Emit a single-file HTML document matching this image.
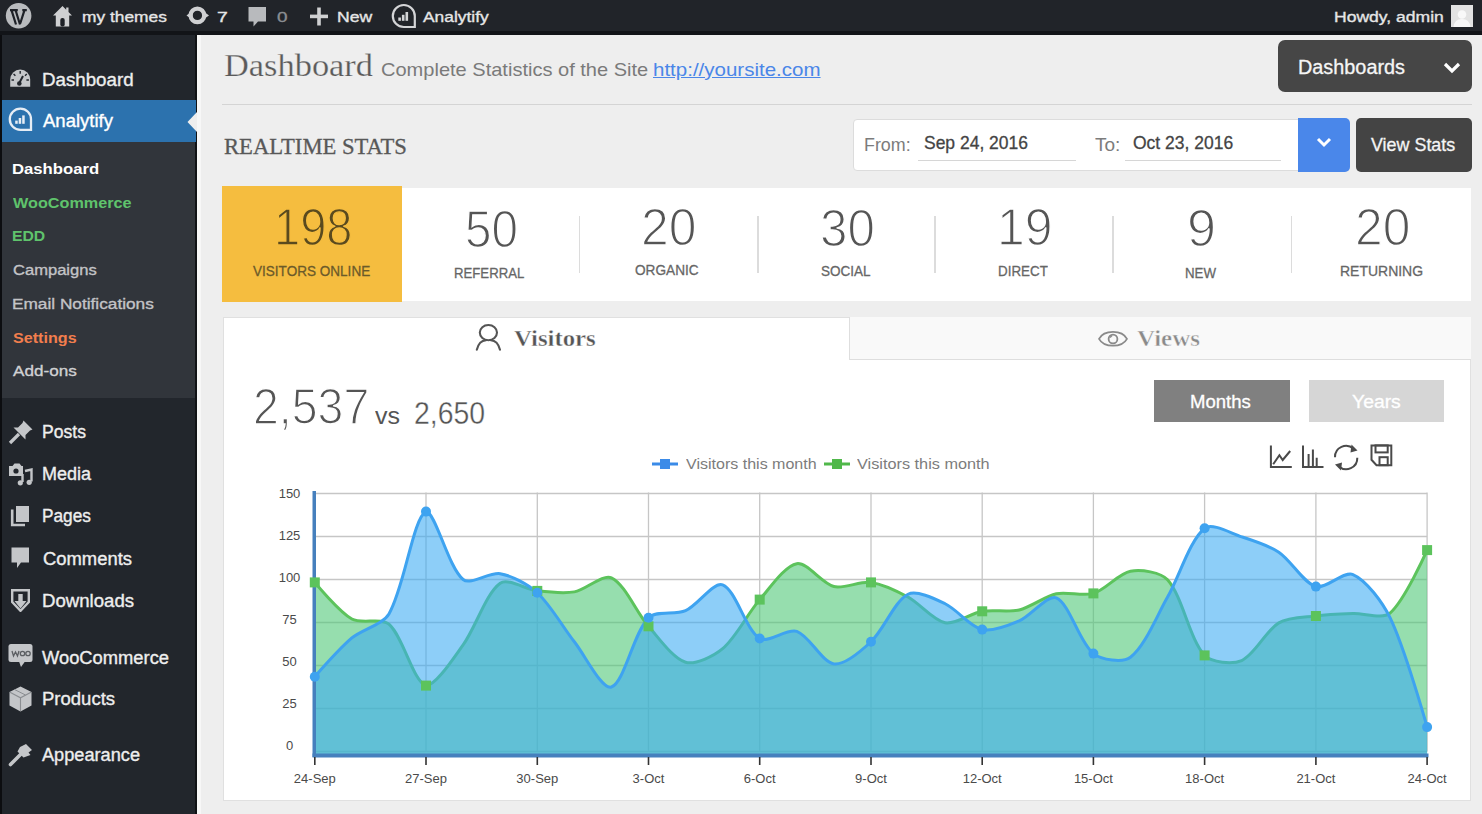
<!DOCTYPE html>
<html><head><meta charset="utf-8"><title>Analytify Dashboard</title><style>
*{margin:0;padding:0;box-sizing:border-box}
html,body{width:1482px;height:814px;overflow:hidden;background:#efefef;font-family:"Liberation Sans", sans-serif}
.abs{position:absolute}
.t{position:absolute;white-space:nowrap}
</style></head><body>
<div class="abs" style="left:0;top:0;width:1482px;height:814px;background:#eeeeee"></div>
<div class="abs" style="left:197px;top:35px;width:4px;height:779px;background:#f7f7f7"></div>
<div class="abs" style="left:0;top:0;width:1482px;height:35px;background:#212429"></div>
<div class="abs" style="left:0;top:31px;width:1482px;height:4px;background:#121418"></div>
<div class="abs" style="left:0;top:35px;width:197px;height:779px;background:#22262c"></div>
<div class="abs" style="left:0;top:35px;width:2px;height:779px;background:#0c0d10"></div>
<div class="abs" style="left:194.5px;top:35px;width:2.5px;height:779px;background:#101215"></div>
<div class="abs" style="left:2px;top:142px;width:192.5px;height:255.5px;background:#31353b"></div>
<div class="abs" style="left:2px;top:100px;width:194px;height:42px;background:#2c72ae"></div>
<svg class="abs" style="left:186px;top:110px" width="12" height="24"><polygon points="1.5,12 11,2 11,22" fill="#eeeeee"/></svg>
<div class="abs" style="left:222px;top:104px;width:1250px;height:1.3px;background:#d4d4d4"></div>
<div class="abs" style="left:1278px;top:40px;width:194px;height:51.5px;background:#464646;border-radius:7px"></div>
<svg class="abs" style="left:1440px;top:58px" width="24" height="20"><polyline points="5,6 12,13 19,6" fill="none" stroke="#fff" stroke-width="3.2"/></svg>
<div class="abs" style="left:853px;top:119px;width:450px;height:52px;background:#fff;border:1.5px solid #dcdcdc;border-radius:4px"></div>
<div class="abs" style="left:918px;top:160.3px;width:158px;height:1.1px;background:#d6d6d6"></div>
<div class="abs" style="left:1124.5px;top:160.3px;width:156.5px;height:1.1px;background:#d6d6d6"></div>
<div class="abs" style="left:1298px;top:118px;width:51.5px;height:53.5px;background:#4a87ea;border-radius:0 5px 5px 0"></div>
<svg class="abs" style="left:1312px;top:133px" width="24" height="20"><polyline points="6,6 12,12 18,6" fill="none" stroke="#fff" stroke-width="3"/></svg>
<div class="abs" style="left:1356px;top:118px;width:116px;height:53.5px;background:#444444;border-radius:5px"></div>
<div class="abs" style="left:222px;top:187.5px;width:1249px;height:113px;background:#ffffff"></div>
<div class="abs" style="left:222px;top:186px;width:179.5px;height:116px;background:#f5bd3f"></div>
<div class="abs" style="left:578.6px;top:216px;width:1.5px;height:57px;background:#dcdcdc"></div>
<div class="abs" style="left:757.2px;top:216px;width:1.5px;height:57px;background:#dcdcdc"></div>
<div class="abs" style="left:934.0px;top:216px;width:1.5px;height:57px;background:#dcdcdc"></div>
<div class="abs" style="left:1112.2px;top:216px;width:1.5px;height:57px;background:#dcdcdc"></div>
<div class="abs" style="left:1290.8px;top:216px;width:1.5px;height:57px;background:#dcdcdc"></div>
<div class="abs" style="left:222.5px;top:316.5px;width:1248.5px;height:484.5px;background:#fff;border:1.5px solid #e0e0e0"></div>
<div class="abs" style="left:848.5px;top:317px;width:622.5px;height:42.5px;background:#f9f9f9;border-left:1.5px solid #dedede;border-bottom:1.5px solid #dedede"></div>
<div class="abs" style="left:1154.3px;top:380.4px;width:135.7px;height:41.6px;background:#808080"></div>
<div class="abs" style="left:1308.5px;top:380.4px;width:135px;height:41.6px;background:#d6d6d6"></div>
<svg class="abs" style="left:0;top:0" width="1482" height="814">
<line x1="314.8" x2="1427.1" y1="751.5" y2="751.5" stroke="#c6c6c6" stroke-width="1.3"/>
<line x1="314.8" x2="1427.1" y1="708.5" y2="708.5" stroke="#c6c6c6" stroke-width="1.3"/>
<line x1="314.8" x2="1427.1" y1="665.5" y2="665.5" stroke="#c6c6c6" stroke-width="1.3"/>
<line x1="314.8" x2="1427.1" y1="622.5" y2="622.5" stroke="#c6c6c6" stroke-width="1.3"/>
<line x1="314.8" x2="1427.1" y1="579.5" y2="579.5" stroke="#c6c6c6" stroke-width="1.3"/>
<line x1="314.8" x2="1427.1" y1="536.5" y2="536.5" stroke="#c6c6c6" stroke-width="1.3"/>
<line x1="314.8" x2="1427.1" y1="493.5" y2="493.5" stroke="#c6c6c6" stroke-width="1.3"/>
<line x1="314.8" x2="314.8" y1="492.5" y2="751.5" stroke="#c6c6c6" stroke-width="1.3"/>
<line x1="426.0" x2="426.0" y1="492.5" y2="751.5" stroke="#c6c6c6" stroke-width="1.3"/>
<line x1="537.3" x2="537.3" y1="492.5" y2="751.5" stroke="#c6c6c6" stroke-width="1.3"/>
<line x1="648.5" x2="648.5" y1="492.5" y2="751.5" stroke="#c6c6c6" stroke-width="1.3"/>
<line x1="759.7" x2="759.7" y1="492.5" y2="751.5" stroke="#c6c6c6" stroke-width="1.3"/>
<line x1="871.0" x2="871.0" y1="492.5" y2="751.5" stroke="#c6c6c6" stroke-width="1.3"/>
<line x1="982.2" x2="982.2" y1="492.5" y2="751.5" stroke="#c6c6c6" stroke-width="1.3"/>
<line x1="1093.4" x2="1093.4" y1="492.5" y2="751.5" stroke="#c6c6c6" stroke-width="1.3"/>
<line x1="1204.6" x2="1204.6" y1="492.5" y2="751.5" stroke="#c6c6c6" stroke-width="1.3"/>
<line x1="1315.9" x2="1315.9" y1="492.5" y2="751.5" stroke="#c6c6c6" stroke-width="1.3"/>
<line x1="1427.1" x2="1427.1" y1="492.5" y2="751.5" stroke="#c6c6c6" stroke-width="1.3"/>
<path d="M314.80 582.42 C314.80 582.42 338.93 611.76 351.88 619.06 C361.18 624.30 381.33 617.37 388.95 624.22 C403.57 637.34 413.45 682.12 426.03 685.62 C435.70 685.62 453.45 658.18 463.11 644.86 C475.70 627.48 485.61 593.90 500.19 583.28 C507.86 577.70 526.03 589.55 537.26 590.85 C548.27 592.13 563.59 593.78 574.34 591.88 C585.84 589.86 602.65 573.72 611.42 577.78 C624.90 584.04 636.44 612.56 648.49 626.28 C658.69 637.89 672.96 658.43 685.57 662.23 C695.21 665.14 713.95 655.99 722.65 648.64 C736.19 637.21 747.64 613.48 759.72 599.62 C769.88 587.99 784.73 565.80 796.80 563.68 C806.98 561.88 821.89 583.52 833.88 586.55 C844.14 589.15 860.20 580.90 870.95 582.42 C882.45 584.05 897.60 591.36 908.03 597.04 C919.85 603.49 933.15 620.54 945.11 622.84 C955.39 624.82 970.81 613.30 982.19 611.32 C993.06 609.43 1008.62 612.46 1019.26 609.94 C1030.87 607.20 1044.73 596.36 1056.34 593.78 C1066.98 591.41 1083.14 596.55 1093.42 593.43 C1105.39 589.79 1118.67 573.41 1130.49 571.24 C1140.91 569.33 1160.64 571.98 1167.57 579.84 C1182.89 597.22 1189.25 638.60 1204.65 655.35 C1211.50 662.80 1232.50 664.56 1241.72 660.51 C1254.75 654.80 1265.82 630.64 1278.80 622.84 C1288.07 617.28 1304.67 617.37 1315.88 615.96 C1326.92 614.58 1341.82 614.00 1352.96 613.56 C1364.07 613.12 1382.54 619.45 1390.03 613.04 C1404.79 600.41 1427.11 550.09 1427.11 550.09 L1427.11 754.50 L314.80 754.50 Z" fill="#50c878" fill-opacity="0.6"/>
<path d="M314.80 582.42 C314.80 582.42 338.93 611.76 351.88 619.06 C361.18 624.30 381.33 617.37 388.95 624.22 C403.57 637.34 413.45 682.12 426.03 685.62 C435.70 685.62 453.45 658.18 463.11 644.86 C475.70 627.48 485.61 593.90 500.19 583.28 C507.86 577.70 526.03 589.55 537.26 590.85 C548.27 592.13 563.59 593.78 574.34 591.88 C585.84 589.86 602.65 573.72 611.42 577.78 C624.90 584.04 636.44 612.56 648.49 626.28 C658.69 637.89 672.96 658.43 685.57 662.23 C695.21 665.14 713.95 655.99 722.65 648.64 C736.19 637.21 747.64 613.48 759.72 599.62 C769.88 587.99 784.73 565.80 796.80 563.68 C806.98 561.88 821.89 583.52 833.88 586.55 C844.14 589.15 860.20 580.90 870.95 582.42 C882.45 584.05 897.60 591.36 908.03 597.04 C919.85 603.49 933.15 620.54 945.11 622.84 C955.39 624.82 970.81 613.30 982.19 611.32 C993.06 609.43 1008.62 612.46 1019.26 609.94 C1030.87 607.20 1044.73 596.36 1056.34 593.78 C1066.98 591.41 1083.14 596.55 1093.42 593.43 C1105.39 589.79 1118.67 573.41 1130.49 571.24 C1140.91 569.33 1160.64 571.98 1167.57 579.84 C1182.89 597.22 1189.25 638.60 1204.65 655.35 C1211.50 662.80 1232.50 664.56 1241.72 660.51 C1254.75 654.80 1265.82 630.64 1278.80 622.84 C1288.07 617.28 1304.67 617.37 1315.88 615.96 C1326.92 614.58 1341.82 614.00 1352.96 613.56 C1364.07 613.12 1382.54 619.45 1390.03 613.04 C1404.79 600.41 1427.11 550.09 1427.11 550.09" fill="none" stroke="#5cc35c" stroke-width="3"/>
<path d="M314.80 676.68 C314.80 676.68 339.69 648.30 351.88 637.98 C361.93 629.47 382.53 624.85 388.95 613.90 C404.77 586.93 413.03 517.59 426.03 511.56 C435.28 511.56 448.13 566.96 463.11 579.50 C470.37 585.58 489.65 571.77 500.19 573.65 C511.89 575.74 528.27 584.48 537.26 592.74 C550.52 604.92 562.94 627.28 574.34 641.76 C585.19 655.55 601.93 690.08 611.42 687.00 C624.17 682.86 633.46 633.16 648.49 617.68 C655.71 610.25 675.44 615.12 685.57 610.63 C697.69 605.26 713.54 581.41 722.65 584.83 C735.79 589.77 745.63 629.64 759.72 638.50 C767.88 643.62 787.16 628.13 796.80 631.44 C809.40 635.77 822.02 662.30 833.88 663.95 C844.27 665.40 861.66 650.49 870.95 641.76 C883.91 629.60 894.43 601.27 908.03 594.29 C916.67 589.86 934.91 598.90 945.11 603.75 C957.15 609.48 970.11 626.75 982.19 629.55 C992.36 631.91 1008.90 625.37 1019.26 620.95 C1031.15 615.88 1047.56 594.03 1056.34 597.90 C1069.80 603.84 1079.12 642.20 1093.42 653.63 C1101.37 660.00 1122.82 663.10 1130.49 657.24 C1145.06 646.13 1157.00 615.43 1167.57 597.04 C1179.25 576.73 1189.69 540.39 1204.65 528.24 C1211.93 522.33 1230.89 533.35 1241.72 536.84 C1253.14 540.52 1268.96 545.56 1278.80 552.15 C1291.21 560.47 1303.32 582.76 1315.88 586.55 C1325.56 589.47 1343.91 570.72 1352.96 574.51 C1366.16 580.05 1382.69 602.58 1390.03 617.68 C1404.94 648.35 1427.11 727.08 1427.11 727.08 L1427.11 754.50 L314.80 754.50 Z" fill="#3aaaf3" fill-opacity="0.58"/>
<path d="M314.80 676.68 C314.80 676.68 339.69 648.30 351.88 637.98 C361.93 629.47 382.53 624.85 388.95 613.90 C404.77 586.93 413.03 517.59 426.03 511.56 C435.28 511.56 448.13 566.96 463.11 579.50 C470.37 585.58 489.65 571.77 500.19 573.65 C511.89 575.74 528.27 584.48 537.26 592.74 C550.52 604.92 562.94 627.28 574.34 641.76 C585.19 655.55 601.93 690.08 611.42 687.00 C624.17 682.86 633.46 633.16 648.49 617.68 C655.71 610.25 675.44 615.12 685.57 610.63 C697.69 605.26 713.54 581.41 722.65 584.83 C735.79 589.77 745.63 629.64 759.72 638.50 C767.88 643.62 787.16 628.13 796.80 631.44 C809.40 635.77 822.02 662.30 833.88 663.95 C844.27 665.40 861.66 650.49 870.95 641.76 C883.91 629.60 894.43 601.27 908.03 594.29 C916.67 589.86 934.91 598.90 945.11 603.75 C957.15 609.48 970.11 626.75 982.19 629.55 C992.36 631.91 1008.90 625.37 1019.26 620.95 C1031.15 615.88 1047.56 594.03 1056.34 597.90 C1069.80 603.84 1079.12 642.20 1093.42 653.63 C1101.37 660.00 1122.82 663.10 1130.49 657.24 C1145.06 646.13 1157.00 615.43 1167.57 597.04 C1179.25 576.73 1189.69 540.39 1204.65 528.24 C1211.93 522.33 1230.89 533.35 1241.72 536.84 C1253.14 540.52 1268.96 545.56 1278.80 552.15 C1291.21 560.47 1303.32 582.76 1315.88 586.55 C1325.56 589.47 1343.91 570.72 1352.96 574.51 C1366.16 580.05 1382.69 602.58 1390.03 617.68 C1404.94 648.35 1427.11 727.08 1427.11 727.08" fill="none" stroke="#3ea3f0" stroke-width="3"/>
<rect x="312.5" y="491" width="3.5" height="266" fill="#4680bd"/>
<rect x="312.5" y="753.5" width="1116" height="4" fill="#4680bd"/>
<rect x="314.0" y="757" width="1.6" height="8" fill="#333"/>
<rect x="425.2" y="757" width="1.6" height="8" fill="#333"/>
<rect x="536.5" y="757" width="1.6" height="8" fill="#333"/>
<rect x="647.7" y="757" width="1.6" height="8" fill="#333"/>
<rect x="758.9" y="757" width="1.6" height="8" fill="#333"/>
<rect x="870.2" y="757" width="1.6" height="8" fill="#333"/>
<rect x="981.4" y="757" width="1.6" height="8" fill="#333"/>
<rect x="1092.6" y="757" width="1.6" height="8" fill="#333"/>
<rect x="1203.8" y="757" width="1.6" height="8" fill="#333"/>
<rect x="1315.1" y="757" width="1.6" height="8" fill="#333"/>
<rect x="1426.3" y="757" width="1.6" height="8" fill="#333"/>
<rect x="309.8" y="577.4" width="10" height="10" fill="#5cc35c"/>
<rect x="421.0" y="680.6" width="10" height="10" fill="#5cc35c"/>
<rect x="532.3" y="585.9" width="10" height="10" fill="#5cc35c"/>
<rect x="643.5" y="621.3" width="10" height="10" fill="#5cc35c"/>
<rect x="754.7" y="594.6" width="10" height="10" fill="#5cc35c"/>
<rect x="866.0" y="577.4" width="10" height="10" fill="#5cc35c"/>
<rect x="977.2" y="606.3" width="10" height="10" fill="#5cc35c"/>
<rect x="1088.4" y="588.4" width="10" height="10" fill="#5cc35c"/>
<rect x="1199.6" y="650.4" width="10" height="10" fill="#5cc35c"/>
<rect x="1310.9" y="611.0" width="10" height="10" fill="#5cc35c"/>
<rect x="1422.1" y="545.1" width="10" height="10" fill="#5cc35c"/>
<circle cx="314.8" cy="676.7" r="5" fill="#3ea3f0"/>
<circle cx="426.0" cy="511.6" r="5" fill="#3ea3f0"/>
<circle cx="537.3" cy="592.7" r="5" fill="#3ea3f0"/>
<circle cx="648.5" cy="617.7" r="5" fill="#3ea3f0"/>
<circle cx="759.7" cy="638.5" r="5" fill="#3ea3f0"/>
<circle cx="871.0" cy="641.8" r="5" fill="#3ea3f0"/>
<circle cx="982.2" cy="629.6" r="5" fill="#3ea3f0"/>
<circle cx="1093.4" cy="653.6" r="5" fill="#3ea3f0"/>
<circle cx="1204.6" cy="528.2" r="5" fill="#3ea3f0"/>
<circle cx="1315.9" cy="586.6" r="5" fill="#3ea3f0"/>
<circle cx="1427.1" cy="727.1" r="5" fill="#3ea3f0"/>
<rect x="652" y="462.5" width="26" height="3" fill="#3b8be8"/><rect x="660" y="459" width="10" height="10" fill="#3b8be8"/>
<rect x="824" y="462.5" width="26" height="3" fill="#50b84a"/><rect x="832" y="459" width="10" height="10" fill="#50b84a"/>
</svg>
<svg class="abs" style="left:5px;top:2px" width="28" height="28" viewBox="0 0 28 28"><circle cx="13.6" cy="13.7" r="12.8" fill="#b9bbbe"/><path d="M6.5 8.2 L11 22.5 M10.6 8.2 L15 22.5 M19.5 8.2 L15.2 21.5 M17.3 8.2 L21.8 8.2 M5 8.2 L9 8.2 M8.8 8.2 L12.8 8.2" stroke="#1e2127" stroke-width="2.2" fill="none"/><path d="M4.5 11 A10 10 0 0 0 9 21.5" stroke="#b9bbbe" stroke-width="1" fill="none"/></svg>
<svg class="abs" style="left:52px;top:5px" width="21" height="22" viewBox="0 0 21 22"><path d="M10.5 1 L1 10.5 L3.8 10.5 L3.8 21.5 L17.2 21.5 L17.2 10.5 L20 10.5 L16.5 7 L16.5 2.5 L14.2 2.5 L14.2 4.7 Z" fill="#cfd0d2"/><rect x="8.3" y="13" width="4.4" height="8.5" rx="2" fill="#1e2127"/></svg>
<svg class="abs" style="left:185px;top:4px" width="26" height="24" viewBox="0 0 26 24"><circle cx="12.4" cy="11.4" r="6.8" fill="none" stroke="#cfd0d2" stroke-width="4.2"/><polygon points="1.5,11.4 7.5,6.5 7.5,16" fill="#cfd0d2"/><polygon points="24,11.4 17.5,6.5 17.5,16" fill="#cfd0d2"/></svg>
<svg class="abs" style="left:248px;top:6px" width="19" height="21" viewBox="0 0 19 21"><path d="M0.5 1 H18 V15.5 H10 L5.5 20.5 L5.5 15.5 H0.5 Z" fill="#b8babd"/></svg>
<svg class="abs" style="left:309px;top:7px" width="20" height="20" viewBox="0 0 20 20"><rect x="8.2" y="0.5" width="3.6" height="18" fill="#cfd0d2"/><rect x="1" y="7.6" width="18" height="3.6" fill="#cfd0d2"/></svg>
<svg class="abs" style="left:391px;top:3px" width="26" height="26" viewBox="0 0 26 26"><path d="M23.8 13 A11 11 0 1 0 12.8 24 L23.8 24 Z" fill="none" stroke="#d4d5d7" stroke-width="2.2"/><rect x="7.3" y="14.5" width="2.6" height="3.3" fill="#d4d5d7"/><rect x="10.9" y="11.8" width="2.6" height="6" fill="#d4d5d7"/><rect x="14.5" y="9" width="2.6" height="8.8" fill="#d4d5d7"/></svg>
<div class="abs" style="left:1451px;top:5px;width:22px;height:22px;background:#e2e2e2"></div>
<svg class="abs" style="left:1451px;top:7px" width="22" height="20" viewBox="0 0 22 20"><circle cx="11" cy="7.5" r="4.3" fill="#f8f8f8"/><path d="M2.5 20 Q3.5 12 11 12 Q18.5 12 19.5 20 Z" fill="#f8f8f8"/></svg>
<svg class="abs" style="left:9px;top:68px" width="23" height="21" viewBox="0 0 23 21"><path d="M1.2 18.8 V11.5 A10 10 0 0 1 21.2 11.5 V18.8 Z" fill="#c4c6c9"/><path d="M11.2 3 V5.8 M4.6 6 L6.4 7.8 M17.8 6 L16 7.8 M2.5 12 H5 M19.9 12 H17.4" stroke="#22262c" stroke-width="1.4"/><path d="M10 15.5 L14 8" stroke="#22262c" stroke-width="2"/><circle cx="10.3" cy="15.5" r="2.3" fill="#22262c"/></svg>
<svg class="abs" style="left:8px;top:107px" width="26" height="26" viewBox="0 0 26 26"><path d="M23 12.3 A10.6 10.6 0 1 0 12.4 22.9 L23 22.9 Z" fill="none" stroke="#e6edf5" stroke-width="2.3"/><rect x="7.2" y="13.6" width="2.5" height="3.2" fill="#e6edf5"/><rect x="10.7" y="11" width="2.5" height="5.8" fill="#e6edf5"/><rect x="14.2" y="8.4" width="2.5" height="8.4" fill="#e6edf5"/></svg>
<svg class="abs" style="left:8px;top:419px" width="26" height="26" viewBox="0 0 26 26"><path d="M15.5 1.5 L24.5 10.5 L22 11.5 L17.5 16 L17.5 20.5 L5.5 8.5 L10 8.5 L14.5 4 Z" fill="#c4c6c9"/><path d="M11 15 L2 24" stroke="#c4c6c9" stroke-width="3.2"/></svg>
<svg class="abs" style="left:8px;top:462px" width="26" height="25" viewBox="0 0 26 25"><path d="M1 4 H4.5 L6.5 1.5 H11.5 L13.5 4 H15 V14 H1 Z" fill="#c4c6c9"/><circle cx="8" cy="9" r="2.6" fill="#22262c"/><path d="M17 9 L23.5 7.5 L23.5 19.5" stroke="#c4c6c9" stroke-width="2.4" fill="none"/><circle cx="21.2" cy="20.3" r="2.6" fill="#c4c6c9"/><path d="M14.5 12 V20" stroke="#c4c6c9" stroke-width="2.4"/><circle cx="12.3" cy="20.8" r="2.6" fill="#c4c6c9"/></svg>
<svg class="abs" style="left:10px;top:505px" width="21" height="22" viewBox="0 0 21 22"><rect x="6" y="1" width="13" height="16" fill="#c4c6c9"/><path d="M2.2 4.5 V20 H15" stroke="#c4c6c9" stroke-width="2.6" fill="none"/></svg>
<svg class="abs" style="left:11px;top:547px" width="19" height="22" viewBox="0 0 19 22"><path d="M0.5 0.5 H18 V15.5 H10 L6 21 V15.5 H0.5 Z" fill="#c4c6c9"/></svg>
<svg class="abs" style="left:11px;top:589px" width="19" height="23" viewBox="0 0 19 23"><path d="M1.2 1.2 H17.8 V13 L9.5 21.8 L1.2 13 Z" fill="none" stroke="#c4c6c9" stroke-width="2.4"/><rect x="7.3" y="5" width="4.4" height="8" fill="#c4c6c9"/><polygon points="3.5,12 15.5,12 9.5,19.5" fill="#c4c6c9"/></svg>
<svg class="abs" style="left:8px;top:643px" width="25" height="25" viewBox="0 0 25 25"><rect x="0.5" y="1" width="24" height="18" rx="2.5" fill="#c4c6c9"/><polygon points="11,18.5 17,18.5 13,24" fill="#c4c6c9"/><path d="M4 8 L5.5 13 L7.5 9 L9.5 13 L11 8" stroke="#5b5e62" stroke-width="1.3" fill="none"/><circle cx="14.5" cy="10.5" r="2.2" fill="none" stroke="#5b5e62" stroke-width="1.3"/><circle cx="20" cy="10.5" r="2.2" fill="none" stroke="#5b5e62" stroke-width="1.3"/></svg>
<svg class="abs" style="left:9px;top:686px" width="23" height="26" viewBox="0 0 23 26"><polygon points="11.5,0.5 22.5,6 22.5,19.5 11.5,25.5 0.5,19.5 0.5,6" fill="#c4c6c9"/><path d="M1 6.3 L11.5 11.8 L22 6.3 M11.5 11.8 V25" stroke="#8b8e92" stroke-width="1.1" fill="none"/><path d="M5.5 3.5 L16.5 9" stroke="#8b8e92" stroke-width="1" fill="none"/></svg>
<svg class="abs" style="left:8px;top:743px" width="25" height="24" viewBox="0 0 25 24"><path d="M12 4 L18 1 L24 7 L20.5 9.5 L22.5 12 L15.5 14.5 L9.5 8.5 Z" fill="#c4c6c9"/><path d="M12.5 11.5 L2.5 21.5" stroke="#c4c6c9" stroke-width="3.6" stroke-linecap="round"/></svg>
<svg class="abs" style="left:474px;top:322px" width="30" height="30" viewBox="0 0 30 30"><ellipse cx="14.4" cy="10.6" rx="8.6" ry="7.6" fill="none" stroke="#555" stroke-width="2.1"/><path d="M2.8 27.8 Q5 18.5 12 18.2 M16.8 18.2 Q23.8 18.5 26 27.8" fill="none" stroke="#555" stroke-width="2.1" stroke-linecap="round"/></svg>
<svg class="abs" style="left:1096px;top:328px" width="34" height="22" viewBox="0 0 34 22"><path d="M3 10.8 C8 1.5, 26 1.5, 31 10.8 C26 20, 8 20, 3 10.8 Z" fill="none" stroke="#8a8a8a" stroke-width="1.7"/><circle cx="17" cy="11" r="4.4" fill="none" stroke="#8a8a8a" stroke-width="1.8"/><path d="M14 9.5 L16 7.5" stroke="#8a8a8a" stroke-width="1.6"/></svg>
<svg class="abs" style="left:1260px;top:435px" width="140" height="40" viewBox="0 0 140 40"><path d="M10.9 10.5 V32.1 H31.8" fill="none" stroke="#4a4a4a" stroke-width="2"/><path d="M13.2 29.3 L19.4 20.3 L22.7 25 L30.2 16" fill="none" stroke="#4a4a4a" stroke-width="2"/><path d="M43 10.5 V32.1 H63.5" fill="none" stroke="#4a4a4a" stroke-width="2"/><path d="M48.6 32 V18.9 M52.9 32 V14.6 M56.7 32 V22.7" fill="none" stroke="#4a4a4a" stroke-width="2"/><path d="M75 22.2 A11 11 0 0 1 93.5 13.8" fill="none" stroke="#4a4a4a" stroke-width="2"/><path d="M97.3 22.8 A11 11 0 0 1 78.8 31.2" fill="none" stroke="#4a4a4a" stroke-width="2"/><polygon points="91.5,9.5 97.5,15.5 90.5,17.5" fill="#4a4a4a"/><polygon points="81,35.5 75,29.5 82,27.5" fill="#4a4a4a"/><path d="M111.5 10.4 H131.3 V30.2 H116.5 L111.5 24.8 Z" fill="none" stroke="#4a4a4a" stroke-width="2"/><rect x="115.5" y="10.4" width="12.2" height="7" fill="none" stroke="#4a4a4a" stroke-width="2"/><rect x="119.5" y="22.2" width="8.2" height="8" fill="none" stroke="#4a4a4a" stroke-width="2"/></svg>
<div id="tb_mythemes" class="t" style="left:81.88px;top:9.18px;font-size:15.5px;line-height:15.5px;color:#e6e6e6;font-family:'Liberation Sans', sans-serif;font-weight:400;transform:scaleX(1.1193);transform-origin:0 0;-webkit-text-stroke:0.35px #e6e6e6;">my themes</div>
<div id="tb_7" class="t" style="left:217.00px;top:9.18px;font-size:15.5px;line-height:15.5px;color:#e6e6e6;font-family:'Liberation Sans', sans-serif;font-weight:400;transform:scaleX(1.2500);transform-origin:0 0;-webkit-text-stroke:0.35px #e6e6e6;">7</div>
<div id="tb_0" class="t" style="left:277.00px;top:9.18px;font-size:15.5px;line-height:15.5px;color:#8a8d91;font-family:'Liberation Sans', sans-serif;font-weight:400;transform:scaleX(1.2222);transform-origin:0 0;-webkit-text-stroke:0.35px #8a8d91;">0</div>
<div id="tb_new" class="t" style="left:336.86px;top:9.18px;font-size:15.5px;line-height:15.5px;color:#e6e6e6;font-family:'Liberation Sans', sans-serif;font-weight:400;transform:scaleX(1.1358);transform-origin:0 0;-webkit-text-stroke:0.35px #e6e6e6;">New</div>
<div id="tb_analytify" class="t" style="left:423.00px;top:9.18px;font-size:15.5px;line-height:15.5px;color:#e6e6e6;font-family:'Liberation Sans', sans-serif;font-weight:400;transform:scaleX(1.1219);transform-origin:0 0;-webkit-text-stroke:0.35px #e6e6e6;">Analytify</div>
<div id="tb_howdy" class="t" style="left:1333.87px;top:9.38px;font-size:15.5px;line-height:15.5px;color:#e6e6e6;font-family:'Liberation Sans', sans-serif;font-weight:400;transform:scaleX(1.1316);transform-origin:0 0;-webkit-text-stroke:0.35px #e6e6e6;">Howdy, admin</div>
<div id="sb_dash" class="t" style="left:42.46px;top:71.16px;font-size:18px;line-height:18px;color:#eeeeee;font-family:'Liberation Sans', sans-serif;font-weight:400;transform:scaleX(1.0401);transform-origin:0 0;-webkit-text-stroke:0.35px #eeeeee;">Dashboard</div>
<div id="sb_analytify" class="t" style="left:42.70px;top:112.46px;font-size:18px;line-height:18px;color:#ffffff;font-family:'Liberation Sans', sans-serif;font-weight:400;transform:scaleX(1.0290);transform-origin:0 0;-webkit-text-stroke:0.35px #ffffff;">Analytify</div>
<div id="sub0" class="t" style="left:12.32px;top:161.28px;font-size:15.5px;line-height:15.5px;color:#ffffff;font-family:'Liberation Sans', sans-serif;font-weight:700;transform:scaleX(1.0769);transform-origin:0 0;">Dashboard</div>
<div id="sub1" class="t" style="left:13.00px;top:194.88px;font-size:15.5px;line-height:15.5px;color:#5fc36c;font-family:'Liberation Sans', sans-serif;font-weight:700;transform:scaleX(1.0458);transform-origin:0 0;">WooCommerce</div>
<div id="sub2" class="t" style="left:11.99px;top:228.38px;font-size:15.5px;line-height:15.5px;color:#5fc36c;font-family:'Liberation Sans', sans-serif;font-weight:700;transform:scaleX(1.0148);transform-origin:0 0;">EDD</div>
<div id="sub3" class="t" style="left:13.00px;top:261.88px;font-size:15.5px;line-height:15.5px;color:#c3c4c7;font-family:'Liberation Sans', sans-serif;font-weight:400;transform:scaleX(1.0680);transform-origin:0 0;-webkit-text-stroke:0.35px #c3c4c7;">Campaigns</div>
<div id="sub4" class="t" style="left:11.89px;top:295.68px;font-size:15.5px;line-height:15.5px;color:#c3c4c7;font-family:'Liberation Sans', sans-serif;font-weight:400;transform:scaleX(1.1125);transform-origin:0 0;-webkit-text-stroke:0.35px #c3c4c7;">Email Notifications</div>
<div id="sub5" class="t" style="left:13.00px;top:329.88px;font-size:15.5px;line-height:15.5px;color:#f27e4d;font-family:'Liberation Sans', sans-serif;font-weight:700;transform:scaleX(1.0409);transform-origin:0 0;">Settings</div>
<div id="sub6" class="t" style="left:13.00px;top:362.88px;font-size:15.5px;line-height:15.5px;color:#d0d1d3;font-family:'Liberation Sans', sans-serif;font-weight:400;transform:scaleX(1.1038);transform-origin:0 0;-webkit-text-stroke:0.35px #d0d1d3;">Add-ons</div>
<div id="main0" class="t" style="left:42.02px;top:422.76px;font-size:18px;line-height:18px;color:#eeeeee;font-family:'Liberation Sans', sans-serif;font-weight:400;transform:scaleX(0.9769);transform-origin:0 0;-webkit-text-stroke:0.35px #eeeeee;">Posts</div>
<div id="main1" class="t" style="left:42.00px;top:464.76px;font-size:18px;line-height:18px;color:#eeeeee;font-family:'Liberation Sans', sans-serif;font-weight:400;-webkit-text-stroke:0.35px #eeeeee;">Media</div>
<div id="main2" class="t" style="left:42.04px;top:506.76px;font-size:18px;line-height:18px;color:#eeeeee;font-family:'Liberation Sans', sans-serif;font-weight:400;transform:scaleX(0.9593);transform-origin:0 0;-webkit-text-stroke:0.35px #eeeeee;">Pages</div>
<div id="main3" class="t" style="left:43.00px;top:549.76px;font-size:18px;line-height:18px;color:#eeeeee;font-family:'Liberation Sans', sans-serif;font-weight:400;transform:scaleX(1.0227);transform-origin:0 0;-webkit-text-stroke:0.35px #eeeeee;">Comments</div>
<div id="main4" class="t" style="left:41.97px;top:591.76px;font-size:18px;line-height:18px;color:#eeeeee;font-family:'Liberation Sans', sans-serif;font-weight:400;transform:scaleX(1.0335);transform-origin:0 0;-webkit-text-stroke:0.35px #eeeeee;">Downloads</div>
<div id="main5" class="t" style="left:42.00px;top:648.76px;font-size:18px;line-height:18px;color:#eeeeee;font-family:'Liberation Sans', sans-serif;font-weight:400;transform:scaleX(1.0185);transform-origin:0 0;-webkit-text-stroke:0.35px #eeeeee;">WooCommerce</div>
<div id="main6" class="t" style="left:41.97px;top:690.46px;font-size:18px;line-height:18px;color:#eeeeee;font-family:'Liberation Sans', sans-serif;font-weight:400;transform:scaleX(1.0281);transform-origin:0 0;-webkit-text-stroke:0.35px #eeeeee;">Products</div>
<div id="main7" class="t" style="left:42.00px;top:745.76px;font-size:18px;line-height:18px;color:#eeeeee;font-family:'Liberation Sans', sans-serif;font-weight:400;transform:scaleX(1.0096);transform-origin:0 0;-webkit-text-stroke:0.35px #eeeeee;">Appearance</div>
<div id="h_dash" class="t" style="left:224.00px;top:49.00px;font-size:32px;line-height:32px;color:#5a5a5a;font-family:'Liberation Serif', serif;font-weight:400;transform:scaleX(1.0748);transform-origin:0 0;-webkit-text-stroke:0.25px #eeeeee;">Dashboard</div>
<div id="h_complete" class="t" style="left:380.90px;top:60.74px;font-size:18.5px;line-height:18.5px;color:#7a7a7a;font-family:'Liberation Sans', sans-serif;font-weight:400;transform:scaleX(1.0828);transform-origin:0 0;">Complete Statistics of the Site</div>
<div id="h_link" class="t" style="left:652.89px;top:60.74px;font-size:18.5px;line-height:18.5px;color:#4a86e8;font-family:'Liberation Sans', sans-serif;font-weight:400;transform:scaleX(1.1086);transform-origin:0 0;text-decoration:underline;">http://yoursite.com</div>
<div id="h_dashboards" class="t" style="left:1298.01px;top:57.27px;font-size:20px;line-height:20px;color:#f5f5f5;font-family:'Liberation Sans', sans-serif;font-weight:400;transform:scaleX(0.9921);transform-origin:0 0;-webkit-text-stroke:0.30px #f5f5f5;">Dashboards</div>
<div id="rt_title" class="t" style="left:224.40px;top:135.24px;font-size:23px;line-height:23px;color:#585858;font-family:'Liberation Serif', serif;font-weight:400;transform:scaleX(0.9843);transform-origin:0 0;-webkit-text-stroke:0.30px #585858;">REALTIME STATS</div>
<div id="d_from" class="t" style="left:864.43px;top:136.14px;font-size:18.5px;line-height:18.5px;color:#7c7c7c;font-family:'Liberation Sans', sans-serif;font-weight:400;transform:scaleX(0.9662);transform-origin:0 0;">From:</div>
<div id="d_fromv" class="t" style="left:924.00px;top:133.84px;font-size:18.5px;line-height:18.5px;color:#444444;font-family:'Liberation Sans', sans-serif;font-weight:400;transform:scaleX(0.9446);transform-origin:0 0;-webkit-text-stroke:0.30px #444444;">Sep 24, 2016</div>
<div id="d_to" class="t" style="left:1094.80px;top:136.14px;font-size:18.5px;line-height:18.5px;color:#7c7c7c;font-family:'Liberation Sans', sans-serif;font-weight:400;transform:scaleX(1.0281);transform-origin:0 0;">To:</div>
<div id="d_tov" class="t" style="left:1132.60px;top:133.84px;font-size:18.5px;line-height:18.5px;color:#444444;font-family:'Liberation Sans', sans-serif;font-weight:400;transform:scaleX(0.9456);transform-origin:0 0;-webkit-text-stroke:0.30px #444444;">Oct 23, 2016</div>
<div id="d_view" class="t" style="left:1371.00px;top:136.14px;font-size:18.5px;line-height:18.5px;color:#f5f5f5;font-family:'Liberation Sans', sans-serif;font-weight:400;transform:scaleX(0.9676);transform-origin:0 0;-webkit-text-stroke:0.30px #f5f5f5;">View Stats</div>
<div id="sn0" class="t" style="left:273.79px;top:200.68px;font-size:52px;line-height:52px;color:#5a4a1e;font-family:'Liberation Sans', sans-serif;font-weight:300;transform:scaleX(0.9042);transform-origin:0 0;-webkit-text-stroke:1.4px #f5bd3f;">198</div>
<div id="sl0" class="t" style="left:252.70px;top:263.10px;font-size:15px;line-height:15px;color:#6b5a2a;font-family:'Liberation Sans', sans-serif;font-weight:400;transform:scaleX(0.9033);transform-origin:0 0;-webkit-text-stroke:0.30px #6b5a2a;">VISITORS ONLINE</div>
<div id="sn1" class="t" style="left:464.57px;top:202.58px;font-size:52px;line-height:52px;color:#555555;font-family:'Liberation Sans', sans-serif;font-weight:300;transform:scaleX(0.9162);transform-origin:0 0;-webkit-text-stroke:1.4px #ffffff;">50</div>
<div id="sl1" class="t" style="left:453.52px;top:264.50px;font-size:15px;line-height:15px;color:#666666;font-family:'Liberation Sans', sans-serif;font-weight:400;transform:scaleX(0.8783);transform-origin:0 0;-webkit-text-stroke:0.30px #666666;">REFERRAL</div>
<div id="sn2" class="t" style="left:641.08px;top:200.98px;font-size:52px;line-height:52px;color:#555555;font-family:'Liberation Sans', sans-serif;font-weight:300;transform:scaleX(0.9588);transform-origin:0 0;-webkit-text-stroke:1.4px #ffffff;">20</div>
<div id="sl2" class="t" style="left:635.00px;top:262.30px;font-size:15px;line-height:15px;color:#666666;font-family:'Liberation Sans', sans-serif;font-weight:400;transform:scaleX(0.9092);transform-origin:0 0;-webkit-text-stroke:0.30px #666666;">ORGANIC</div>
<div id="sn3" class="t" style="left:819.75px;top:201.98px;font-size:52px;line-height:52px;color:#555555;font-family:'Liberation Sans', sans-serif;font-weight:300;transform:scaleX(0.9468);transform-origin:0 0;-webkit-text-stroke:1.4px #ffffff;">30</div>
<div id="sl3" class="t" style="left:820.70px;top:263.10px;font-size:15px;line-height:15px;color:#666666;font-family:'Liberation Sans', sans-serif;font-weight:400;transform:scaleX(0.9017);transform-origin:0 0;-webkit-text-stroke:0.30px #666666;">SOCIAL</div>
<div id="sn4" class="t" style="left:997.12px;top:201.48px;font-size:52px;line-height:52px;color:#555555;font-family:'Liberation Sans', sans-serif;font-weight:300;transform:scaleX(0.9599);transform-origin:0 0;-webkit-text-stroke:1.4px #ffffff;">19</div>
<div id="sl4" class="t" style="left:997.91px;top:262.80px;font-size:15px;line-height:15px;color:#666666;font-family:'Liberation Sans', sans-serif;font-weight:400;transform:scaleX(0.8926);transform-origin:0 0;-webkit-text-stroke:0.30px #666666;">DIRECT</div>
<div id="sn5" class="t" style="left:1186.89px;top:201.98px;font-size:52px;line-height:52px;color:#555555;font-family:'Liberation Sans', sans-serif;font-weight:300;transform:scaleX(1.0040);transform-origin:0 0;-webkit-text-stroke:1.4px #ffffff;">9</div>
<div id="sl5" class="t" style="left:1184.71px;top:265.30px;font-size:15px;line-height:15px;color:#666666;font-family:'Liberation Sans', sans-serif;font-weight:400;transform:scaleX(0.8870);transform-origin:0 0;-webkit-text-stroke:0.30px #666666;">NEW</div>
<div id="sn6" class="t" style="left:1354.89px;top:201.48px;font-size:52px;line-height:52px;color:#555555;font-family:'Liberation Sans', sans-serif;font-weight:300;transform:scaleX(0.9570);transform-origin:0 0;-webkit-text-stroke:1.4px #ffffff;">20</div>
<div id="sl6" class="t" style="left:1339.77px;top:262.80px;font-size:15px;line-height:15px;color:#666666;font-family:'Liberation Sans', sans-serif;font-weight:400;transform:scaleX(0.9315);transform-origin:0 0;-webkit-text-stroke:0.30px #666666;">RETURNING</div>
<div id="tab_vis" class="t" style="left:513.60px;top:327.04px;font-size:23px;line-height:23px;color:#555555;font-family:'Liberation Serif', serif;font-weight:700;transform:scaleX(1.0784);transform-origin:0 0;-webkit-text-stroke:0.35px #fff;">Visitors</div>
<div id="tab_views" class="t" style="left:1137.00px;top:326.74px;font-size:23px;line-height:23px;color:#8a8a8a;font-family:'Liberation Serif', serif;font-weight:700;transform:scaleX(1.0869);transform-origin:0 0;-webkit-text-stroke:0.45px #f9f9f9;">Views</div>
<div id="big1" class="t" style="left:252.94px;top:381.68px;font-size:50px;line-height:50px;color:#555555;font-family:'Liberation Sans', sans-serif;font-weight:400;transform:scaleX(0.9290);transform-origin:0 0;-webkit-text-stroke:1.4px #fff;">2,537</div>
<div id="big_vs" class="t" style="left:375.40px;top:403.68px;font-size:24px;line-height:24px;color:#555555;font-family:'Liberation Sans', sans-serif;font-weight:400;transform:scaleX(1.0417);transform-origin:0 0;">vs</div>
<div id="big2" class="t" style="left:414.08px;top:397.76px;font-size:31px;line-height:31px;color:#555555;font-family:'Liberation Sans', sans-serif;font-weight:400;transform:scaleX(0.9170);transform-origin:0 0;-webkit-text-stroke:0.35px #fff;">2,650</div>
<div id="btn_months" class="t" style="left:1189.97px;top:392.76px;font-size:18px;line-height:18px;color:#ffffff;font-family:'Liberation Sans', sans-serif;font-weight:400;transform:scaleX(1.0305);transform-origin:0 0;-webkit-text-stroke:0.30px #ffffff;">Months</div>
<div id="btn_years" class="t" style="left:1352.00px;top:392.76px;font-size:18px;line-height:18px;color:#ffffff;font-family:'Liberation Sans', sans-serif;font-weight:400;transform:scaleX(1.0756);transform-origin:0 0;-webkit-text-stroke:0.30px #ffffff;">Years</div>
<div id="leg1" class="t" style="left:686.00px;top:455.88px;font-size:15.5px;line-height:15.5px;color:#7c7c7c;font-family:'Liberation Sans', sans-serif;font-weight:400;transform:scaleX(1.0340);transform-origin:0 0;">Visitors this month</div>
<div id="leg2" class="t" style="left:857.00px;top:455.88px;font-size:15.5px;line-height:15.5px;color:#7c7c7c;font-family:'Liberation Sans', sans-serif;font-weight:400;transform:scaleX(1.0499);transform-origin:0 0;">Visitors this month</div>
<div id="yl0" class="t" style="left:289.5px;top:487.40px;font-size:13px;line-height:13px;color:#4a4a4a;width:0;display:flex;justify-content:center;">150</div>
<div id="yl1" class="t" style="left:289.5px;top:528.60px;font-size:13px;line-height:13px;color:#4a4a4a;width:0;display:flex;justify-content:center;">125</div>
<div id="yl2" class="t" style="left:289.5px;top:571.00px;font-size:13px;line-height:13px;color:#4a4a4a;width:0;display:flex;justify-content:center;">100</div>
<div id="yl3" class="t" style="left:289.5px;top:612.90px;font-size:13px;line-height:13px;color:#4a4a4a;width:0;display:flex;justify-content:center;">75</div>
<div id="yl4" class="t" style="left:289.5px;top:654.90px;font-size:13px;line-height:13px;color:#4a4a4a;width:0;display:flex;justify-content:center;">50</div>
<div id="yl5" class="t" style="left:289.5px;top:696.50px;font-size:13px;line-height:13px;color:#4a4a4a;width:0;display:flex;justify-content:center;">25</div>
<div id="yl6" class="t" style="left:289.5px;top:738.50px;font-size:13px;line-height:13px;color:#4a4a4a;width:0;display:flex;justify-content:center;">0</div>
<div id="xl0" class="t" style="left:314.8px;top:771.90px;font-size:13px;line-height:13px;color:#4a4a4a;width:0;display:flex;justify-content:center;">24-Sep</div>
<div id="xl1" class="t" style="left:426.0px;top:771.90px;font-size:13px;line-height:13px;color:#4a4a4a;width:0;display:flex;justify-content:center;">27-Sep</div>
<div id="xl2" class="t" style="left:537.3px;top:771.90px;font-size:13px;line-height:13px;color:#4a4a4a;width:0;display:flex;justify-content:center;">30-Sep</div>
<div id="xl3" class="t" style="left:648.5px;top:771.90px;font-size:13px;line-height:13px;color:#4a4a4a;width:0;display:flex;justify-content:center;">3-Oct</div>
<div id="xl4" class="t" style="left:759.7px;top:771.90px;font-size:13px;line-height:13px;color:#4a4a4a;width:0;display:flex;justify-content:center;">6-Oct</div>
<div id="xl5" class="t" style="left:871.0px;top:771.90px;font-size:13px;line-height:13px;color:#4a4a4a;width:0;display:flex;justify-content:center;">9-Oct</div>
<div id="xl6" class="t" style="left:982.2px;top:771.90px;font-size:13px;line-height:13px;color:#4a4a4a;width:0;display:flex;justify-content:center;">12-Oct</div>
<div id="xl7" class="t" style="left:1093.4px;top:771.90px;font-size:13px;line-height:13px;color:#4a4a4a;width:0;display:flex;justify-content:center;">15-Oct</div>
<div id="xl8" class="t" style="left:1204.6px;top:771.90px;font-size:13px;line-height:13px;color:#4a4a4a;width:0;display:flex;justify-content:center;">18-Oct</div>
<div id="xl9" class="t" style="left:1315.9px;top:771.90px;font-size:13px;line-height:13px;color:#4a4a4a;width:0;display:flex;justify-content:center;">21-Oct</div>
<div id="xl10" class="t" style="left:1427.1px;top:771.90px;font-size:13px;line-height:13px;color:#4a4a4a;width:0;display:flex;justify-content:center;">24-Oct</div>
</body></html>
